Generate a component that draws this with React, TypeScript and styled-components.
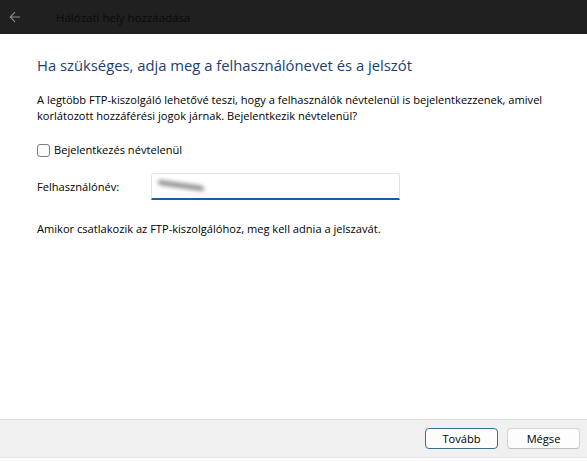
import React from 'react';
import styled, { createGlobalStyle } from 'styled-components';

const GlobalStyle = createGlobalStyle`
  html, body {
    margin: 0;
    padding: 0;
    background: #ffffff;
  }
  #root {
    height: 461px;
  }
  * {
    box-sizing: border-box;
  }
`;

const Window = styled.div`
  height: 461px;
  display: flex;
  flex-direction: column;
  font-family: 'Segoe UI', 'Open Sans', 'Noto Sans', sans-serif;
  color: #000;
`;

const TitleBar = styled.div`
  height: 34px;
  flex: none;
  background: #202020;
  display: flex;
  align-items: center;
`;

const BackButton = styled.div`
  width: 26px;
  height: 28px;
  margin-left: 2px;
  display: flex;
  align-items: center;
  justify-content: center;
`;

const TitleText = styled.div`
  margin-left: 28px;
  font-size: 11.5px;
  color: #0a0a0a;
`;

const Content = styled.div`
  flex: 1;
  padding: 21px 37px 0 37px;
  display: flex;
  flex-direction: column;
`;

const Heading = styled.div`
  font-size: 14.8px;
  line-height: 20px;
  color: #1c3e73;
`;

const Paragraph = styled.div<{ gap: number }>`
  margin-top: ${(p) => p.gap}px;
  font-size: 11.1px;
  line-height: 16px;
  color: #000;
  white-space: nowrap;
`;

const CheckRow = styled.label`
  margin-top: 18px;
  display: flex;
  align-items: center;
  gap: 4px;
  font-size: 11.1px;
  line-height: 16px;
`;

const Box = styled.span`
  width: 13px;
  height: 13px;
  border: 1px solid #7d7d7d;
  border-radius: 3px;
  background: #fbfbfb;
`;

const FieldRow = styled.div`
  margin-top: 15px;
  display: flex;
  align-items: center;
  font-size: 11.1px;
`;

const FieldLabel = styled.div`
  width: 114px;
`;

const Input = styled.div`
  width: 249px;
  height: 27px;
  border: 1px solid #e4e4e4;
  border-bottom: 2px solid #1160ab;
  border-radius: 3px 3px 0 0;
  display: flex;
  align-items: center;
  padding-left: 6px;
`;

const Blurred = styled.span`
  display: block;
  width: 46px;
  height: 5px;
  margin-top: -2px;
  background: #8a8a8a;
  border-radius: 3px;
  filter: blur(2px);
  transform: skewY(8deg);
`;

const Footer = styled.div`
  flex: none;
  height: 39px;
  background: #f0f0f0;
  border-top: 1px solid #dedede;
  border-bottom: 1px solid #e2e2e2;
  margin-bottom: 3px;
  display: flex;
  align-items: center;
  justify-content: flex-end;
  gap: 9px;
  padding-right: 7px;
`;

const Button = styled.button<{ primary?: boolean }>`
  width: 73px;
  height: 21px;
  background: #fdfdfd;
  border: 1px solid ${(p) => (p.primary ? '#3c6e8c' : '#d2d2d2')};
  border-bottom-color: ${(p) => (p.primary ? '#3c6e8c' : '#bdbdbd')};
  border-radius: 4px;
  font-family: inherit;
  font-size: 11.1px;
  color: #000;
  padding: 0;
`;

export default function App() {
  return (
    <>
      <GlobalStyle />
      <Window>
        <TitleBar>
          <BackButton>
            <svg width="12" height="12" viewBox="0 0 12 12" fill="none">
              <path d="M11 6H1.5M6 1.2L1.2 6L6 10.8" stroke="#8d8d8d" strokeWidth="1.1" />
            </svg>
          </BackButton>
          <TitleText>Hálózati hely hozzáadása</TitleText>
        </TitleBar>
        <Content>
          <Heading>Ha szükséges, adja meg a felhasználónevet és a jelszót</Heading>
          <Paragraph gap={17}>
            A legtöbb FTP-kiszolgáló lehetővé teszi, hogy a felhasználók névtelenül is bejelentkezzenek, amivel
            <br />
            korlátozott hozzáférési jogok járnak. Bejelentkezik névtelenül?
          </Paragraph>
          <CheckRow>
            <Box />
            Bejelentkezés névtelenül
          </CheckRow>
          <FieldRow>
            <FieldLabel>Felhasználónév:</FieldLabel>
            <Input>
              <Blurred />
            </Input>
          </FieldRow>
          <Paragraph gap={21}>Amikor csatlakozik az FTP-kiszolgálóhoz, meg kell adnia a jelszavát.</Paragraph>
        </Content>
        <Footer>
          <Button primary>Tovább</Button>
          <Button>Mégse</Button>
        </Footer>
      </Window>
    </>
  );
}
